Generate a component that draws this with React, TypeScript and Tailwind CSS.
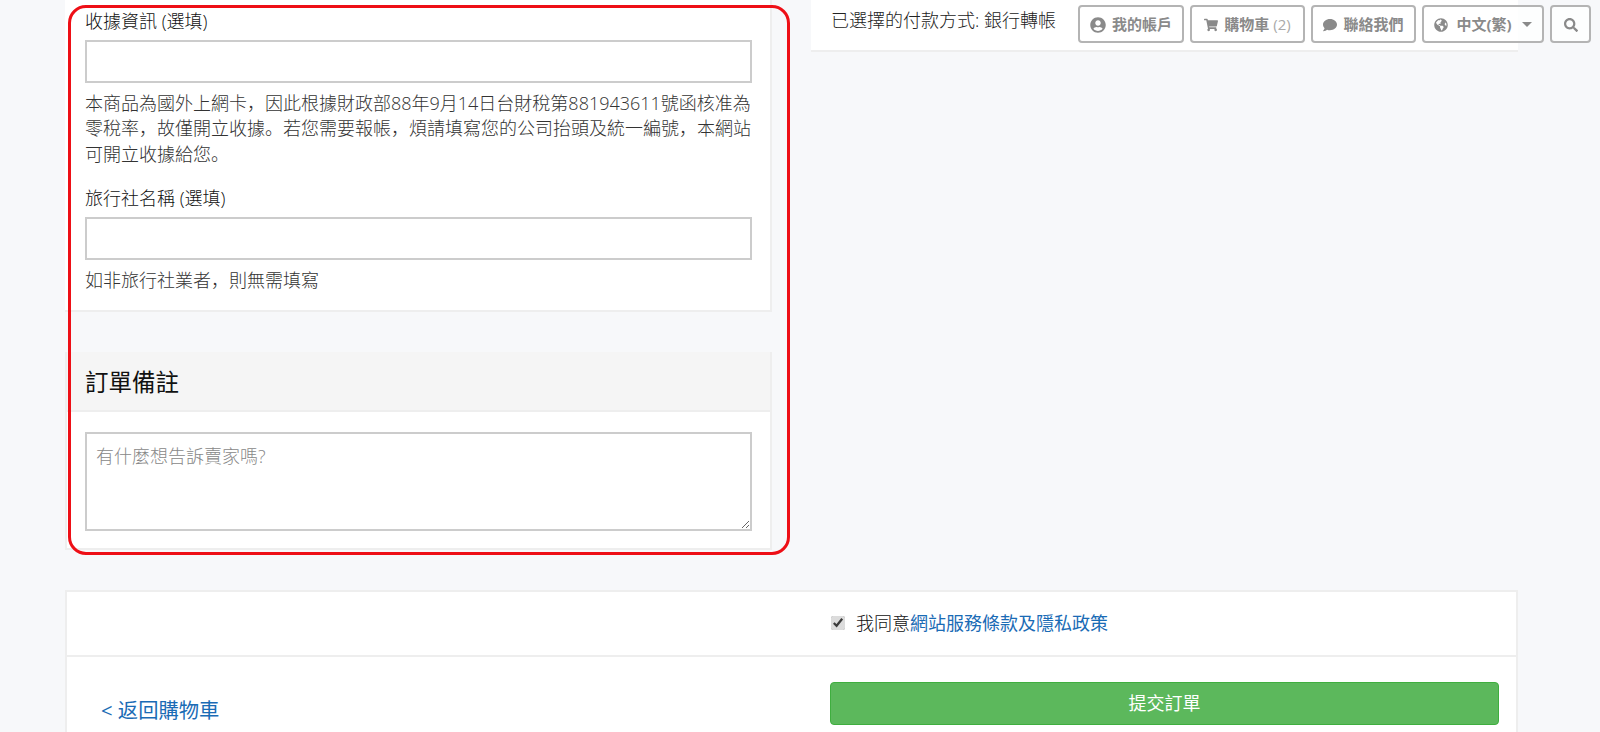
import { FaComment, FaGlobeAmericas, FaSearch, FaShoppingCart, FaUserCircle } from "react-icons/fa";

const fontStack = "font-['Open_Sans','Noto_Sans_CJK_SC',sans-serif]";
const navButton =
  "flex h-[38px] items-center justify-center rounded-[4px] border-2 border-[#b4b4b4] bg-white/80 pt-[1px] text-[15px] font-bold text-[#8a8a8a]";

const TopNav = () => {
  return (
    <div className="absolute left-[1078px] top-[5px] flex gap-[6px]">
      <button className={`${navButton} w-[106px] gap-[6px]`}>
        <FaUserCircle className="h-[16px] w-[16px]" />
        我的帳戶
      </button>
      <button className={`${navButton} w-[115px] gap-[6px]`}>
        <FaShoppingCart className="h-[14px] w-[14px]" />
        <span>
          購物車 <span className="font-normal text-[#aaa]">(2)</span>
        </span>
      </button>
      <button className={`${navButton} w-[105px] gap-[6px]`}>
        <FaComment className="h-[14px] w-[14px]" />
        聯絡我們
      </button>
      <button className={`${navButton} w-[122px] gap-[8px]`}>
        <FaGlobeAmericas className="h-[14px] w-[14px]" />
        中文(繁)
        <span className="ml-[2px] h-0 w-0 border-x-[5px] border-t-[5px] border-x-transparent border-t-[#8a8a8a]" />
      </button>
      <button className={`${navButton} w-[41px]`}>
        <FaSearch className="h-[14px] w-[14px]" />
      </button>
    </div>
  );
};

const OptionalField = ({ label, children }: { label: string; children: React.ReactNode }) => {
  return (
    <div>
      <label className="block text-[#111]">{label}</label>
      <input className="mt-[5px] block h-[43px] w-full border-2 border-[#ccc] bg-white" />
      <p className="mt-[8px] text-[#333]">{children}</p>
    </div>
  );
};

export default function App() {
  return (
    <div className={`${fontStack} relative h-[732px] overflow-hidden bg-[#f7f8fa] px-[65px] text-[18px] font-light leading-[25.7px]`}>
      <div className="w-[1453px]">
        <div className="flex items-start gap-[39px]">
          <div className="flex w-[707px] flex-col gap-[40px]">
            <section className="flex h-[312px] flex-col gap-[18px] border-b-2 border-r-2 border-[#eee] bg-white pl-[20px] pr-[18px] pt-[9px]">
              <OptionalField label="收據資訊 (選填)">
                本商品為國外上網卡，因此根據財政部88年9月14日台財稅第881943611號函核准為零稅率，故僅開立收據。若您需要報帳，煩請填寫您的公司抬頭及統一編號，本網站可開立收據給您。
              </OptionalField>
              <OptionalField label="旅行社名稱 (選填)">如非旅行社業者，則無需填寫</OptionalField>
            </section>

            <section className="h-[198px] border-x-2 border-b-2 border-[#eee] bg-white">
              <div className="flex h-[60px] items-center border-b-2 border-[#eee] bg-[#f5f5f5] px-[18px] pt-[3px]">
                <h3 className="text-[23.5px] font-normal text-[#111]">訂單備註</h3>
              </div>
              <div className="px-[18px] pt-[20px]">
                <textarea
                  className="block h-[99px] w-full resize-y border-2 border-[#ccc] bg-white px-[9px] py-[10px] placeholder:text-[#888]"
                  placeholder="有什麼想告訴賣家嗎?"
                />
              </div>
            </section>
          </div>

          <aside className="flex h-[52px] w-[707px] items-center border-b-2 border-[#eee] bg-white pb-[8px] pl-[20px] text-[#222]">
            已選擇的付款方式: 銀行轉帳
          </aside>
        </div>

        <section className="mt-[40px] border-2 border-[#eee] bg-white">
          <div className="flex h-[65px] items-center border-b-2 border-[#eee] pl-[764px]">
            <label className="flex items-center gap-[11px] text-[#111]">
              <input type="checkbox" defaultChecked className="h-[14px] w-[14px] accent-[#dcdcdc]" />
              <span>
                我同意<a className="font-normal text-[#1a6bb5]">網站服務條款及隱私政策</a>
              </span>
            </label>
          </div>
          <div className="flex h-[90px] justify-between pl-[34px] pr-[17px] pt-[25px]">
            <a className="pt-[3px] text-[20.3px] font-normal leading-[50px] text-[#1a6bb5]">&lt; 返回購物車</a>
            <button className="h-[43px] w-[669px] rounded-[4px] border border-[#3fae3f] bg-[#5cb85c] font-normal text-white">
              提交訂單
            </button>
          </div>
        </section>
      </div>

      <TopNav />

      {/* red annotation drawn on top of the screenshot */}
      <div className="pointer-events-none absolute left-[68px] top-[5px] h-[550px] w-[722px] rounded-[18px] border-[3px] border-[#ee0f16]" />
    </div>
  );
}
